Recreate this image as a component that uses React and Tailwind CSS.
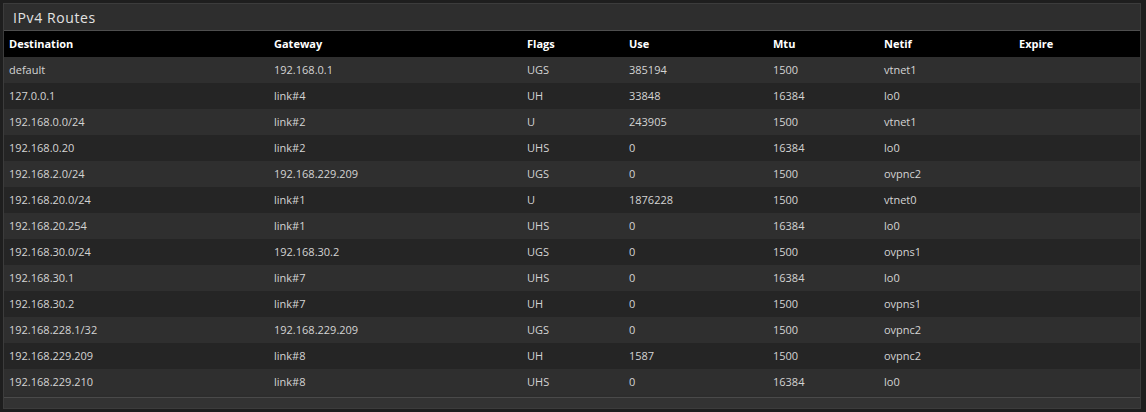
const columns = [
  { key: 'dest', label: 'Destination', width: 'w-[265px]' },
  { key: 'gw', label: 'Gateway', width: 'w-[253px]' },
  { key: 'flags', label: 'Flags', width: 'w-[102px]' },
  { key: 'use', label: 'Use', width: 'w-[144px]' },
  { key: 'mtu', label: 'Mtu', width: 'w-[111px]' },
  { key: 'netif', label: 'Netif', width: 'w-[135px]' },
  { key: 'expire', label: 'Expire', width: '' },
]

const routes = [
  ['default', '192.168.0.1', 'UGS', '385194', '1500', 'vtnet1', ''],
  ['127.0.0.1', 'link#4', 'UH', '33848', '16384', 'lo0', ''],
  ['192.168.0.0/24', 'link#2', 'U', '243905', '1500', 'vtnet1', ''],
  ['192.168.0.20', 'link#2', 'UHS', '0', '16384', 'lo0', ''],
  ['192.168.2.0/24', '192.168.229.209', 'UGS', '0', '1500', 'ovpnc2', ''],
  ['192.168.20.0/24', 'link#1', 'U', '1876228', '1500', 'vtnet0', ''],
  ['192.168.20.254', 'link#1', 'UHS', '0', '16384', 'lo0', ''],
  ['192.168.30.0/24', '192.168.30.2', 'UGS', '0', '1500', 'ovpns1', ''],
  ['192.168.30.1', 'link#7', 'UHS', '0', '16384', 'lo0', ''],
  ['192.168.30.2', 'link#7', 'UH', '0', '1500', 'ovpns1', ''],
  ['192.168.228.1/32', '192.168.229.209', 'UGS', '0', '1500', 'ovpnc2', ''],
  ['192.168.229.209', 'link#8', 'UH', '1587', '1500', 'ovpnc2', ''],
  ['192.168.229.210', 'link#8', 'UHS', '0', '16384', 'lo0', ''],
]

export default function App() {
  return (
    <div
      className="w-[1146px] h-[412px] bg-[#1e1e1e] pt-[3px] pl-[3px] pr-[5px] pb-[3px]"
      style={{ fontFamily: '"Open Sans", "Noto Sans", sans-serif' }}
    >
      <div className="h-[406px] flex flex-col border border-[#3c3c3c] bg-[#2d2d2d]">
        {/* panel title */}
        <div className="h-[27px] shrink-0 flex items-center px-[9px] border-b border-[#4e4e4e] bg-[#2e2e2e]">
          <span className="text-[14px] tracking-[0.6px] text-[#e2e2e2]">IPv4 Routes</span>
        </div>

        <table className="w-full table-fixed border-collapse text-[11px]">
          <thead>
            <tr className="h-[26px] bg-black">
              {columns.map((c) => (
                <th key={c.key} className={`${c.width} pl-[5px] text-left font-bold text-white`}>
                  {c.label}
                </th>
              ))}
            </tr>
          </thead>
          <tbody>
            {routes.map((r, i) => (
              <tr key={i} className={`h-[26px] ${i % 2 === 0 ? 'bg-[#2f2f2f]' : 'bg-[#252525]'}`}>
                {r.map((cell, j) => (
                  <td key={j} className="pl-[5px] text-[#d4d4d4] whitespace-nowrap">
                    {cell}
                  </td>
                ))}
              </tr>
            ))}
          </tbody>
        </table>

        <div className="h-[2px] shrink-0" />
        <div className="flex-1 border-t border-[#4a4a4a] bg-[#333333]" />
      </div>
    </div>
  )
}
